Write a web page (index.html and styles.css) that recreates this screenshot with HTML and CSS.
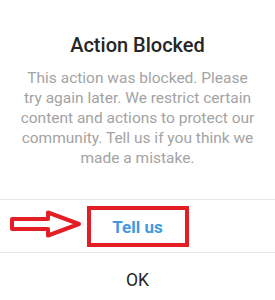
FILE: index.html
```html
<!DOCTYPE html>
<html>
<head>
<meta charset="utf-8">
<link rel="stylesheet" href="styles.css">
</head>
<body>
<div class="dialog">
  <div class="content">
    <h1 class="title">Action Blocked</h1>
    <p class="message">This action was blocked. Please<br>try again later. We restrict certain<br>content and actions to protect our<br>community. Tell us if you think we<br>made a mistake.</p>
  </div>
  <div class="action action-tell">
    <svg class="arrow" width="90" height="53" viewBox="0 0 90 53">
      <path d="M12 19 H48 V12.5 L79 24 L48 35.5 V29 H12 Z" fill="#fff" stroke="#e31e24" stroke-width="4" stroke-linejoin="round"/>
    </svg>
    <span class="highlight">Tell us</span>
  </div>
  <div class="action action-ok">OK</div>
</div>
</body>
</html>
```
FILE: styles.css
```css
html, body {
  margin: 0;
  padding: 0;
  background: #fff;
}
body {
  font-family: Roboto, "Noto Sans", sans-serif;
  width: 275px;
  height: 300px;
  overflow: hidden;
}
.dialog {
  display: flex;
  flex-direction: column;
}
.content {
  display: flex;
  flex-direction: column;
  align-items: center;
  padding: 31px 0 31px;
}
.title {
  margin: 0;
  font-size: 20px;
  font-weight: 500;
  line-height: 28px;
  color: #262626;
}
.message {
  margin: 9px 0 0;
  font-size: 15.5px;
  line-height: 20px;
  color: #a3a3a3;
  text-align: center;
}
.action {
  position: relative;
  display: flex;
  align-items: center;
  justify-content: center;
  border-top: 1px solid #e8e8e8;
}
.action-tell {
  height: 52px;
}
.highlight {
  box-sizing: border-box;
  width: 102px;
  height: 41px;
  margin-top: 1px;
  border: 4px solid #e31e24;
  display: flex;
  align-items: center;
  justify-content: center;
  color: #4299e1;
  font-weight: 700;
  font-size: 17px;
}
.arrow {
  position: absolute;
  left: 0;
  top: 0;
}
.action-ok {
  height: 52px;
  padding-top: 3px;
  box-sizing: border-box;
  font-size: 17.5px;
  color: #262626;
}
```
